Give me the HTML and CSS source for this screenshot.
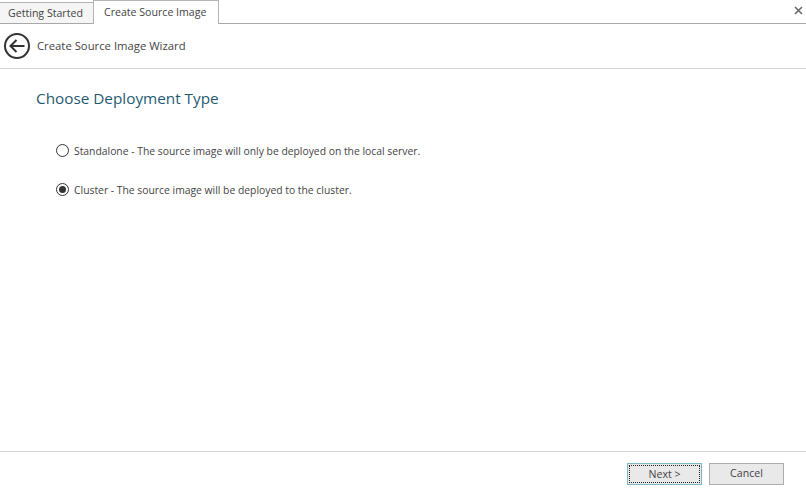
FILE: index.html
```html
<!DOCTYPE html>
<html lang="en">
<head>
<meta charset="utf-8">
<title>Create Source Image</title>
<link rel="stylesheet" href="styles.css">
</head>
<body>
<div class="app">
  <div class="tabbar">
    <div class="tab">Getting Started</div>
    <div class="tab active">Create Source Image</div>
    <div class="spacer"></div>
    <svg class="close" width="9" height="9" viewBox="0 0 9 9"><path d="M1 1l7 7M8 1l-7 7" stroke="#666" stroke-width="1.5" fill="none"/></svg>
  </div>
  <div class="header">
    <svg class="back" width="28" height="28" viewBox="0 0 28 28"><circle cx="14" cy="14" r="12" fill="none" stroke="#333" stroke-width="2"/><path d="M21.5 14H8M13.5 8l-6 6 6 6" fill="none" stroke="#333" stroke-width="2"/></svg>
    <span>Create Source Image Wizard</span>
  </div>
  <main class="content">
    <h1>Choose Deployment Type</h1>
    <div class="options">
      <div class="option"><span class="radio"></span><span>Standalone - The source image will only be deployed on the local server.</span></div>
      <div class="option"><span class="radio checked"></span><span>Cluster - The source image will be deployed to the cluster.</span></div>
    </div>
  </main>
  <div class="footer">
    <button class="btn primary"><span>Next &gt;</span></button>
    <button class="btn cancel"><span>Cancel</span></button>
  </div>
</div>
</body>
</html>
```
FILE: styles.css
```css
* { box-sizing: border-box; }
html, body { margin: 0; padding: 0; background: #fff; }
.app {
  width: 806px; height: 496px; display: flex; flex-direction: column;
  font-family: "Open Sans", "Liberation Sans", sans-serif; font-size: 10.35px; color: #444; overflow: hidden;
}
.tabbar { height: 24px; display: flex; align-items: flex-end; border-bottom: 1px solid #a8a8a8; flex: none; position: relative; font-size: 10.6px; }
.tab { height: 21px; padding: 0 10px 0 8px; line-height: 20px; border: 1px solid #b4b4b4; border-bottom: none; border-left: none; background: #f5f5f5; width: 94px; white-space: nowrap; }
.tab.active { height: 24px; width: 126px; background: #fff; margin-bottom: -1px; line-height: 23px; padding-left: 10px; border-left: 1px solid #b4b4b4; margin-left: -1px; }
.spacer { flex: 1; }
.close { position: absolute; right: 3px; top: 6px; }
.header { height: 45px; flex: none; display: flex; align-items: center; gap: 6px; padding: 0 0 1px 3px; border-bottom: 1px solid #d4d4d4; font-size: 11.3px; }
.content { flex: 1; padding: 18px 36px 0; }
h1 { margin: 0; font-size: 15.3px; font-weight: 400; color: #1f5a72; line-height: 22px; }
.options { margin-top: 33px; margin-left: 20px; display: flex; flex-direction: column; gap: 22px; }
.option { display: flex; align-items: center; gap: 5px; height: 17px; white-space: nowrap; }
.radio { width: 13px; height: 13px; border: 1px solid #333; border-radius: 50%; background: #fff; position: relative; flex: none; }
.radio.checked::after { content: ""; position: absolute; inset: 2px; background: #333; border-radius: 50%; }
.footer { height: 45px; flex: none; border-top: 1px solid #d4d4d4; display: flex; justify-content: flex-end; gap: 7px; padding: 11px 22px 0 0; font-size: 10.6px; }
.btn { width: 75px; height: 22px; padding: 1px; border: 1px solid #adadad; background: #e9e9e9; font: inherit; color: #444; }
.btn span { display: block; height: 100%; line-height: 16px; }
.btn.primary { border-color: #7cb8c6; }
.btn.primary span { border: 1px dotted #222; }
```
